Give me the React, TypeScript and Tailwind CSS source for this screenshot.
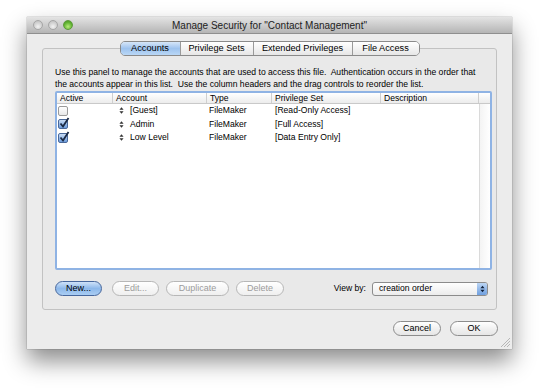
import { Fragment } from "react";

// Mac OS X "Manage Security" sheet: tabs, accounts list, buttons.

const font = { fontFamily: '"Liberation Sans", Arial, sans-serif' };

const columns = [
  { label: "Active", w: "w-[56px]" },
  { label: "Account", w: "w-[94px]" },
  { label: "Type", w: "w-[65px]" },
  { label: "Privilege Set", w: "w-[109px]" },
  { label: "Description", w: "w-[98px]" },
];

const accounts = [
  { active: false, name: "[Guest]", type: "FileMaker", set: "[Read-Only Access]" },
  { active: true, name: "Admin", type: "FileMaker", set: "[Full Access]" },
  { active: true, name: "Low Level", type: "FileMaker", set: "[Data Entry Only]" },
];

const tabs = [
  { label: "Accounts", w: "w-[59px]" },
  { label: "Privilege Sets", w: "w-[73px]" },
  { label: "Extended Privileges", w: "w-[99px]" },
  { label: "File Access", w: "w-[67px]" },
];

function Light({ green }: { green?: boolean }) {
  return (
    <span
      className={`h-[10px] w-[10px] rounded-full border ${
        green
          ? "border-[#5d9a3a] bg-[radial-gradient(circle_at_50%_70%,#b8ec7a,#5fb230_60%,#4a8f26)]"
          : "border-[#a6a6a6] bg-[radial-gradient(circle_at_50%_70%,#f2f2f2,#cfcfcf_60%,#bdbdbd)]"
      }`}
    />
  );
}

function Checkbox({ on }: { on: boolean }) {
  if (!on)
    return (
      <span className="h-[10px] w-[10px] rounded-[2px] border border-[#9a9a9a] bg-gradient-to-b from-white to-[#e8e8e8]" />
    );
  return (
    <span className="relative h-[10px] w-[10px] rounded-[2px] border border-[#49689a] bg-gradient-to-b from-[#c8dcf4] to-[#6d9ddd]">
      <svg viewBox="0 0 12 12" className="absolute -left-[1px] -top-[3px] h-[12px] w-[12px]">
        <path d="M2.5 6.5 L5 9.5 L10.5 1" fill="none" stroke="#1b2a44" strokeWidth="1.8" />
      </svg>
    </span>
  );
}

function DragHandle() {
  return (
    <svg viewBox="0 0 6 8" className="h-[7px] w-[5px]">
      <path d="M3 0 L5.5 3 L0.5 3 Z M3 8 L5.5 5 L0.5 5 Z" fill="#333" />
    </svg>
  );
}

function PushButton({ label, w, disabled, primary }: { label: string; w: string; disabled?: boolean; primary?: boolean }) {
  const look = primary
    ? "border-[#47679c] bg-gradient-to-b from-[#cfe2f8] via-[#8db8ea] to-[#a9cdf3] text-black"
    : disabled
      ? "border-[#b7b7b7] bg-gradient-to-b from-white to-[#efefef] text-[#9c9c9c]"
      : "border-[#8c8c8c] bg-gradient-to-b from-white via-[#f1f1f1] to-[#e6e6e6] text-black";
  return (
    <div className={`flex h-[15px] items-center justify-center rounded-full border text-[9px] ${w} ${look}`}>
      {label}
    </div>
  );
}

export default function App() {
  return (
    <div className="h-[388px] w-[540px] overflow-hidden bg-white pl-[27px] pt-[17px]" style={font}>
      <div className="flex h-[332px] w-[485px] flex-col bg-[#ececec] shadow-[0_12px_22px_rgba(0,0,0,0.45),0_0_1px_rgba(0,0,0,0.5)]">
        {/* title bar */}
        <div className="relative flex h-[17px] items-center border-b border-[#8f8f8f] bg-gradient-to-b from-[#e4e4e4] to-[#b5b5b5] px-[6px]">
          <div className="flex gap-[5px]">
            <Light />
            <Light />
            <Light green />
          </div>
          <div className="absolute inset-x-0 top-0 flex h-[16px] items-center justify-center text-[10px] text-[#222]">
            Manage Security for "Contact Management"
          </div>
        </div>

        {/* tab view */}
        <div className="ml-[15px] mt-[7px] flex w-[455px] flex-col">
          <div className="relative z-10 flex justify-center">
            <div className="flex h-[15px] overflow-hidden rounded-[5px] border border-[#8a8a8a] text-[9.2px]">
              {tabs.map((t, i) => (
                <div
                  key={t.label}
                  className={`flex items-center justify-center ${t.w} ${i > 0 ? "border-l border-[#9a9a9a]" : ""} ${
                    i === 0
                      ? "bg-gradient-to-b from-[#d6e6f8] via-[#9ec3ee] to-[#b9d7f6] text-black"
                      : "bg-gradient-to-b from-white via-[#f3f3f3] to-[#e6e6e6] text-black"
                  }`}
                >
                  {t.label}
                </div>
              ))}
            </div>
          </div>

          <div className="-mt-[8px] flex h-[262px] flex-col rounded-[3px] border border-[#c2c2c2] bg-[#e9e9e9] pl-[12px] pr-[4px] pt-[17px]">
            <p className="text-[8.6px] leading-[12px] text-black">
              Use this panel to manage the accounts that are used to access this file.&nbsp; Authentication occurs in the order that
              <br />
              the accounts appear in this list.&nbsp; Use the column headers and the drag controls to reorder the list.
            </p>

            {/* accounts list */}
            <div className="mt-[1px] h-[179px] w-[437px] rounded-[2px] border-2 border-[#8fb3e4] bg-white">
              <div className="flex h-[11px] border-b border-[#c9c9c9] bg-gradient-to-b from-white to-[#ececec] text-[8.6px]">
                {columns.map((c) => (
                  <div key={c.label} className={`flex items-center border-r border-[#cfcfcf] pl-[3px] ${c.w}`}>
                    {c.label}
                  </div>
                ))}
                <div className="flex-1" />
              </div>
              <div className="flex h-[164px]">
                <div className="w-[422px]">
                  {accounts.map((a) => (
                    <div key={a.name} className="flex h-[13.5px] items-center text-[8.6px]">
                      <div className="flex w-[56px] items-center pl-[1px]">
                        <Checkbox on={a.active} />
                      </div>
                      <div className="flex w-[94px] items-center gap-[6px] pl-[6px]">
                        <DragHandle />
                        <span>{a.name}</span>
                      </div>
                      <div className="w-[65px] pl-[2px]">{a.type}</div>
                      <div className="w-[109px] pl-[3px]">{a.set}</div>
                      <div className="w-[98px]" />
                    </div>
                  ))}
                </div>
                <div className="flex-1 border-l border-[#dadada] bg-gradient-to-r from-[#f4f4f4] to-white" />
              </div>
            </div>

            {/* button row */}
            <div className="mt-[11px] flex items-center">
              <PushButton label="New..." w="w-[47px]" primary />
              <div className="ml-[10px] flex gap-[7px]">
                <PushButton label="Edit..." w="w-[47px]" disabled />
                <PushButton label="Duplicate" w="w-[63px]" disabled />
                <PushButton label="Delete" w="w-[48px]" disabled />
              </div>
              <span className="ml-auto mr-[6px] text-[8.6px]">View by:</span>
              <div className="mr-[4px] flex h-[14px] w-[116px] items-center justify-between rounded-[3px] border border-[#8c8c8c] bg-gradient-to-b from-white to-[#ececec] pl-[6px] text-[8.6px]">
                <span>creation order</span>
                <span className="flex h-[12px] w-[10px] flex-col items-center justify-center gap-[1px] rounded-r-[2px] bg-gradient-to-b from-[#bcd6f4] to-[#6f9fdf]">
                  <svg viewBox="0 0 6 9" className="h-[8px] w-[5px]">
                    <path d="M3 0.5 L5.5 3.5 L0.5 3.5 Z M3 8.5 L5.5 5.5 L0.5 5.5 Z" fill="#10203a" />
                  </svg>
                </span>
              </div>
            </div>
          </div>
        </div>

        {/* dialog buttons */}
        <div className="mr-[14px] mt-[11px] flex justify-end gap-[9px]">
          <PushButton label="Cancel" w="w-[48px]" />
          <PushButton label="OK" w="w-[48px]" />
        </div>

        <div className="mt-auto flex justify-end pb-[2px] pr-[2px]">
          <svg viewBox="0 0 10 10" className="h-[10px] w-[10px]">
            {[3, 6, 9].map((d) => (
              <Fragment key={d}>
                <line x1={10 - d} y1={10} x2={10} y2={10 - d} stroke="#a8a8a8" strokeWidth="0.8" />
              </Fragment>
            ))}
          </svg>
        </div>
      </div>
    </div>
  );
}
